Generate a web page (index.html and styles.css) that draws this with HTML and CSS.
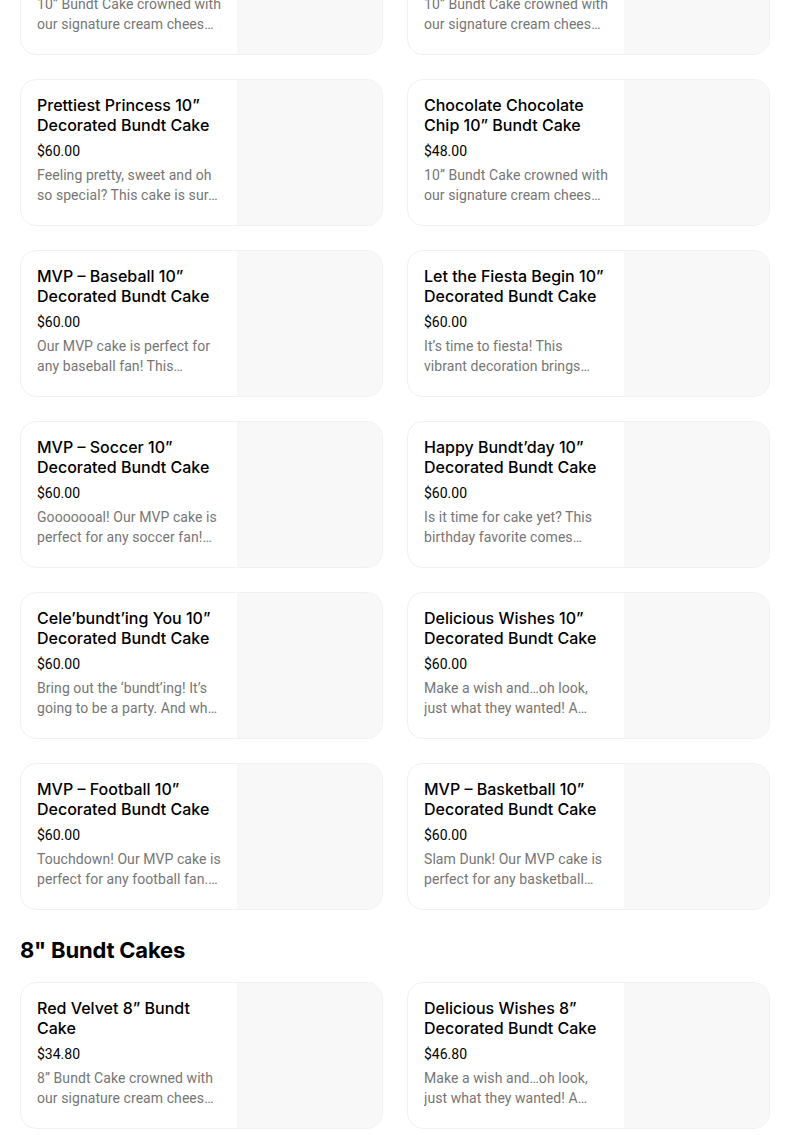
FILE: index.html
```html
<!DOCTYPE html>
<html>
<head>
<meta charset="utf-8">
<link rel="stylesheet" href="styles.css">
</head>
<body>
<div class="page">
  <section class="grid first">
    <div class="card"><div class="info"><div class="title">Red Velvet 10” Decorated Bundt Cake</div><div class="price">$60.00</div><div class="desc">10” Bundt Cake crowned with our signature cream cheese frosting.</div></div><div class="img"></div></div>
    <div class="card"><div class="info"><div class="title">Classic Vanilla 10” Bundt Cake</div><div class="price">$48.00</div><div class="desc">10” Bundt Cake crowned with our signature cream cheese frosting.</div></div><div class="img"></div></div>
    <div class="card"><div class="info"><div class="title">Prettiest Princess 10” Decorated Bundt Cake</div><div class="price">$60.00</div><div class="desc">Feeling pretty, sweet and oh so special? This cake is sure to make you feel like royalty.</div></div><div class="img"></div></div>
    <div class="card"><div class="info"><div class="title">Chocolate Chocolate Chip 10” Bundt Cake</div><div class="price">$48.00</div><div class="desc">10” Bundt Cake crowned with our signature cream cheese frosting.</div></div><div class="img"></div></div>
    <div class="card"><div class="info"><div class="title">MVP – Baseball 10” Decorated Bundt Cake</div><div class="price">$60.00</div><div class="desc">Our MVP cake is perfect for any baseball fan! This delicious cake is a home run.</div></div><div class="img"></div></div>
    <div class="card"><div class="info"><div class="title">Let the Fiesta Begin 10” Decorated Bundt Cake</div><div class="price">$60.00</div><div class="desc">It’s time to fiesta! This vibrant decoration brings excitement to the party.</div></div><div class="img"></div></div>
    <div class="card"><div class="info"><div class="title">MVP – Soccer 10” Decorated Bundt Cake</div><div class="price">$60.00</div><div class="desc">Gooooooal! Our MVP cake is perfect for any soccer fan! This cake scores.</div></div><div class="img"></div></div>
    <div class="card"><div class="info"><div class="title">Happy Bundt’day 10” Decorated Bundt Cake</div><div class="price">$60.00</div><div class="desc">Is it time for cake yet? This birthday favorite comes decorated with candles.</div></div><div class="img"></div></div>
    <div class="card"><div class="info"><div class="title">Cele’bundt’ing You 10” Decorated Bundt Cake</div><div class="price">$60.00</div><div class="desc">Bring out the ‘bundt’ing! It’s going to be a party. And what better way.</div></div><div class="img"></div></div>
    <div class="card"><div class="info"><div class="title">Delicious Wishes 10” Decorated Bundt Cake</div><div class="price">$60.00</div><div class="desc">Make a wish and…oh look, just what they wanted! A delicious cake.</div></div><div class="img"></div></div>
    <div class="card"><div class="info"><div class="title">MVP – Football 10” Decorated Bundt Cake</div><div class="price">$60.00</div><div class="desc">Touchdown! Our MVP cake is perfect for any football fan. This cake scores.</div></div><div class="img"></div></div>
    <div class="card"><div class="info"><div class="title">MVP – Basketball 10” Decorated Bundt Cake</div><div class="price">$60.00</div><div class="desc">Slam Dunk! Our MVP cake is perfect for any basketball fan. Nothing but net.</div></div><div class="img"></div></div>
  </section>
  <h2 class="section-title">8" Bundt Cakes</h2>
  <section class="grid">
    <div class="card"><div class="info"><div class="title">Red Velvet 8” Bundt Cake</div><div class="price">$34.80</div><div class="desc">8” Bundt Cake crowned with our signature cream cheese frosting.</div></div><div class="img"></div></div>
    <div class="card"><div class="info"><div class="title">Delicious Wishes 8” Decorated Bundt Cake</div><div class="price">$46.80</div><div class="desc">Make a wish and…oh look, just what they wanted! A delicious cake.</div></div><div class="img"></div></div>
  </section>
</div>
</body>
</html>
```
FILE: styles.css
```css
html, body {
  margin: 0;
  padding: 0;
  background: #ffffff;
}
body {
  font-family: "Inter", "Roboto", sans-serif;
  color: #000000;
  overflow: hidden;
}
.page {
  padding: 0 34px 0 20px;
  margin-top: -92px;
}
.grid {
  display: grid;
  grid-template-columns: 1fr 1fr;
  column-gap: 24px;
  row-gap: 24px;
}
.card {
  display: flex;
  height: 147px;
  box-sizing: border-box;
  border: 1px solid #f1f1f1;
  border-radius: 16px;
  overflow: hidden;
  background: #ffffff;
}
.info {
  width: 216px;
  box-sizing: border-box;
  padding: 15px 16px 16px;
  flex: none;
}
.img {
  flex: 1;
  background: #f8f8f8;
}
.title {
  font-size: 16px;
  font-weight: 500;
  line-height: 20px;
  color: #000000;
}
.price {
  margin-top: 6px;
  font-family: "Roboto", sans-serif;
  font-size: 14px;
  line-height: 20px;
  color: #000000;
}
.desc {
  margin-top: 4px;
  font-family: "Roboto", sans-serif;
  font-size: 14px;
  line-height: 20px;
  letter-spacing: 0.07px;
  color: #767676;
  display: -webkit-box;
  -webkit-line-clamp: 2;
  -webkit-box-orient: vertical;
  overflow: hidden;
}
.section-title {
  margin: 24px 0 16px;
  font-size: 22px;
  line-height: 32px;
  font-weight: 700;
  letter-spacing: -0.2px;
}
```
